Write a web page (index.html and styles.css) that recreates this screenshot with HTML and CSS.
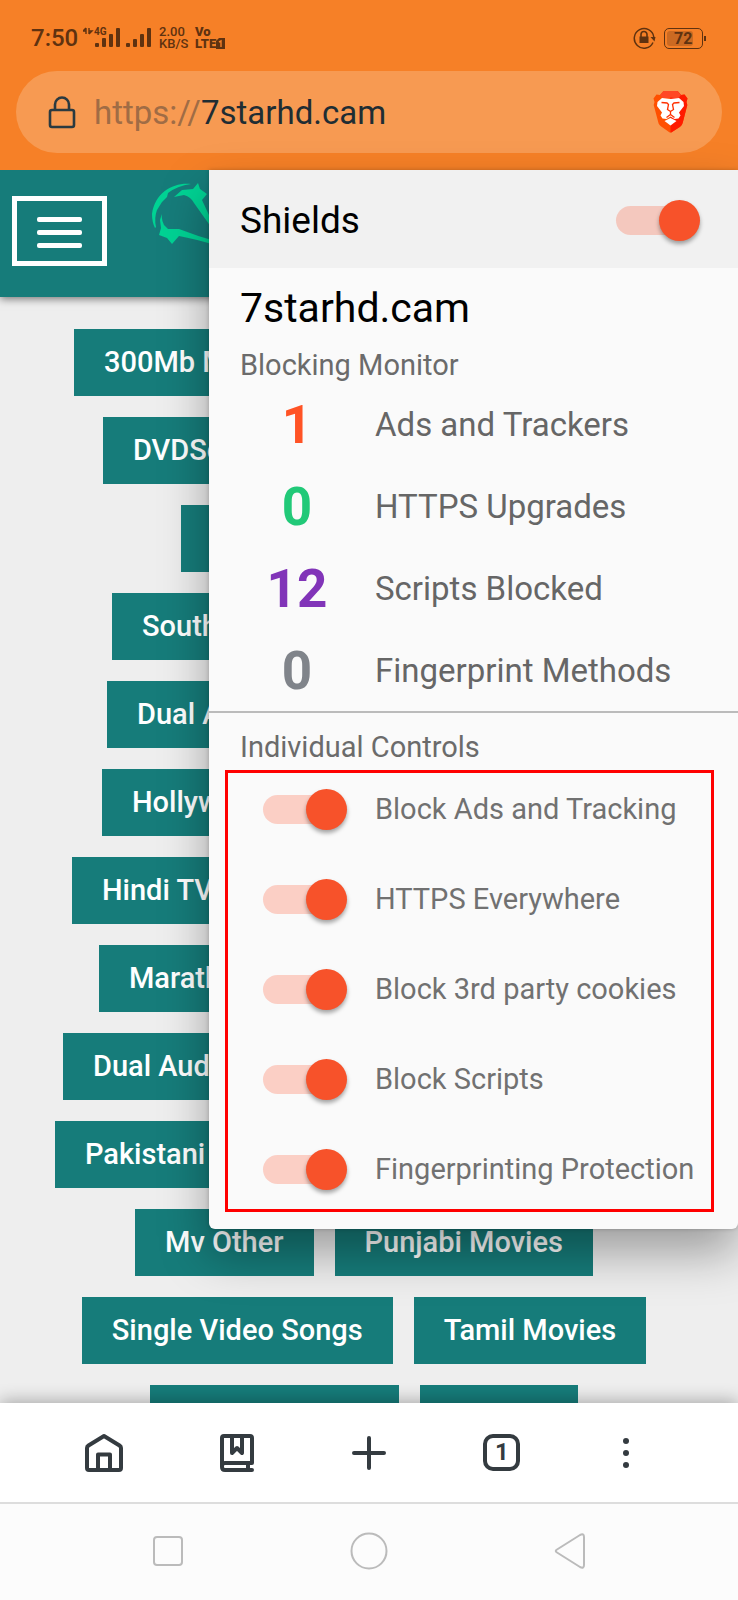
FILE: index.html
```html
<!DOCTYPE html>
<html lang="en">
<head>
    <meta charset="UTF-8">
    <meta name="viewport" content="width=device-width, initial-scale=1.0">
    <title>7starhd.cam</title>
    <link rel="stylesheet" href="styles.css">
</head>
<body>
    <header class="top">
        <div class="status">
            <span class="time">7:50</span>
            <span class="signal">
                <svg width="70" height="22" viewBox="0 0 70 22">
                    <path d="M3 1v6M3 1L0 4h3M6 1v6M6 7l3-3H6" fill="none" stroke="#5f3210" stroke-width="1.400"/>
                    <text x="11" y="8" class="net">4G</text>
                    <g fill="#5f3210">
                        <rect x="12" y="16" width="4" height="4" rx="1"/>
                        <rect x="19" y="11" width="4" height="9" rx="1"/>
                        <rect x="26" y="7" width="4" height="13" rx="1"/>
                        <rect x="33" y="1" width="4" height="19" rx="1"/>
                        <rect x="43" y="16" width="4" height="4" rx="1"/>
                        <rect x="50" y="12" width="4" height="8" rx="1"/>
                        <rect x="57" y="7" width="4" height="13" rx="1"/>
                        <rect x="64" y="1" width="4" height="19" rx="1"/>
                    </g>
                </svg>
            </span>
            <span class="stack speed"><span>2.00</span><span>KB/S</span></span>
            <span class="stack volte"><span>Vo</span><span>LTE<svg width="9" height="11" viewBox="0 0 9 11"><path d="M3 0h6v11H0V3z" fill="#5f3210"/><path d="M3 4l2-1v6" fill="none" stroke="#f68027" stroke-width="1.400"/></svg></span></span>
            <svg class="rotate" width="23" height="22" viewBox="0 0 23 22">
                <path d="M20 15.500A9.800 9.800 0 1 1 20.800 10" fill="none" stroke="#5f3210" stroke-width="1.500"/>
                <path d="M17.500 10h5l-1 4.500z" fill="#5f3210"/>
                <rect x="6.500" y="9.500" width="9" height="6.500" fill="#5f3210"/>
                <path d="M8 10V7.500a3 3 0 0 1 6 0V10" fill="none" stroke="#5f3210" stroke-width="1.600"/>
            </svg>
            <span class="battery"><b>72</b></span>
        </div>
        <div class="address">
            <svg class="lock" width="28" height="34" viewBox="0 0 28 34">
                <rect x="2" y="15" width="24" height="17" rx="2" fill="none" stroke="#2b3a40" stroke-width="2.600"/>
                <path d="M7 15V9.500a7 7 0 0 1 14 0V15" fill="none" stroke="#2b3a40" stroke-width="2.600"/>
            </svg>
            <div class="url"><span>https://</span>7starhd.cam</div>
            <button class="brave" aria-label="Brave Shields">
                <svg width="35" height="42" viewBox="0 0 35 42">
                    <path d="M10.500 0h14l3.500 4 3.500-.5 3 4-1 3.500.8 3-4.500 17.500c-.5 2-1.300 3.200-3 4.500L19 41q-1.500 1-3 0l-7.800-5.500c-1.700-1.200-2.600-2.500-3-4.500L.7 14l.8-3L.5 7.500l3-4L7 4z" fill="#ff5000"/>
                    <path d="M17.500 0h7l3.500 4 3.500-.5 3 4-1 3.500.8 3-4.500 17.500c-.5 2-1.300 3.200-3 4.500L19 41q-.8.500-1.500.5z" fill="#ff1b00"/>
                    <path d="M10.500 0h14l3.500 4-3 3.500-7.500-1-7.500 1L7 4z" fill="#ff4724"/>
                    <path d="M9 7l8.500 1L26 7l4.500 4 .5 4-5 6.500 1.500 3-2 3-4 .5-4-2.500-4 2.500-4-.5-2-3L9 21.500 4 15l.5-4z" fill="#fff"/>
                    <path d="M17.500 27l6 3-6 4.500-6-4.500z" fill="#fff"/>
                    <path d="M8.500 11.500l5.500.5 1.500 1.500-1 5 3 2 3-2-1-5L21 12l5.500-.5M17.500 20.500v3l-4 3m4-3l4 3" fill="none" stroke="#ff3000" stroke-width="1.300"/>
                </svg>
            </button>
        </div>
    </header>

    <div class="content">
        <div class="site">
            <div class="site-header">
                <button class="menu" aria-label="Menu"><i></i><i></i><i></i></button>
                <svg class="logo" width="90" height="72" viewBox="0 0 90 72" fill="#00d394">
                    <path d="M41 4C24 2 5 12 2 34q0 8 3 14l1-1q-2-9 1-17l5-8 5-5 1-4Q27 6 41 4z"/>
                    <path d="M24 17l8-7 11-1 5-6 2 6 7 5-5 6q6 14 14 28l-5-1L44 23q-3-6-10-8z"/>
                    <path d="M13 30q-3 7 1 15l4 4 11 0q18 7 36 12v4Q45 59 29 56l-7 8-5-6-8-3 2-7-1-8z"/>
                </svg>
            </div>
            <nav class="categories">
                <div class="row"><a href="#">300Mb Movies</a></div>
                <div class="row"><a href="#">DVDScr Movies</a></div>
                <div class="row"><a href="#">Featured Movies</a></div>
                <div class="row"><a href="#">South Hindi Movies</a></div>
                <div class="row"><a href="#">Dual Audio Movies</a></div>
                <div class="row"><a href="#">Hollywood Movies</a></div>
                <div class="row"><a href="#">Hindi TV Shows</a></div>
                <div class="row"><a href="#">Marathi Movies</a></div>
                <div class="row"><a href="#">Dual Audio Series</a></div>
                <div class="row"><a href="#">Pakistani Movies</a></div>
                <div class="row"><a href="#">Mv Other</a><a href="#">Punjabi Movies</a></div>
                <div class="row"><a href="#">Single Video Songs</a><a href="#">Tamil Movies</a></div>
                <div class="row"><a href="#">Telugu Movies</a><a href="#">Trailers</a></div>
            </nav>
        </div>

        <!-- Shields panel -->
        <section class="panel">
            <div class="panel-header">
                <label for="shields">Shields</label>
                <input type="checkbox" class="switch" id="shields" checked>
            </div>
            <div class="monitor">
                <h1>7starhd.cam</h1>
                <h2>Blocking Monitor</h2>
                <ul class="stats">
                    <li><b class="orange">1</b>Ads and Trackers</li>
                    <li><b class="green">0</b>HTTPS Upgrades</li>
                    <li><b class="purple">12</b>Scripts Blocked</li>
                    <li><b class="gray">0</b>Fingerprint Methods</li>
                </ul>
            </div>
            <div class="controls">
                <h2>Individual Controls</h2>
                <div class="control-list">
                    <label><input type="checkbox" class="switch" checked>Block Ads and Tracking</label>
                    <label><input type="checkbox" class="switch" checked>HTTPS Everywhere</label>
                    <label><input type="checkbox" class="switch" checked>Block 3rd party cookies</label>
                    <label><input type="checkbox" class="switch" checked>Block Scripts</label>
                    <label><input type="checkbox" class="switch" checked>Fingerprinting Protection</label>
                </div>
            </div>
        </section>
    </div>

    <!-- Browser toolbar -->
    <div class="toolbar">
        <button aria-label="Home">
            <svg width="40" height="40" viewBox="0 0 40 40">
                <path d="M3 15q0-1.500 1.500-2.500L20 3l15.500 9.500Q37 13.500 37 15v20q0 2-2 2H5q-2 0-2-2zM14 37V21.500h12V37"/>
            </svg>
        </button>
        <button aria-label="Bookmarks">
            <svg width="36" height="40" viewBox="0 0 36 40">
                <path d="M33 37H6q-3 0-3-3V5q0-2 2-2h26q2 0 2 2v25H6q-3 0-3 3M29 30v7M13 3v17l5-5 5 5V3"/>
            </svg>
        </button>
        <button aria-label="New tab">
            <svg width="36" height="36" viewBox="0 0 36 36"><path d="M18 3v30M3 18h30"/></svg>
        </button>
        <button aria-label="Tabs"><span class="tabs">1</span></button>
        <button aria-label="More">
            <svg width="8" height="32" viewBox="0 0 8 32">
                <g class="dots"><circle cx="4" cy="4" r="3"/><circle cx="4" cy="16" r="3"/><circle cx="4" cy="28" r="3"/></g>
            </svg>
        </button>
    </div>

    <div class="navbar">
        <button aria-label="Recent apps"><svg width="32" height="32" viewBox="0 0 32 32"><rect x="2" y="2" width="28" height="28" rx="3"/></svg></button>
        <button aria-label="Home screen"><svg width="38" height="38" viewBox="0 0 38 38"><circle cx="19" cy="19" r="17.500"/></svg></button>
        <button aria-label="Back"><svg width="32" height="38" viewBox="0 0 32 38"><path d="M3 17.500L26 3q4-2 4 2v28q0 4-4 2L3 20.500q-2.500-1.500 0-3z"/></svg></button>
    </div>
</body>
</html>
```

FILE: styles.css
```css
* {
    margin: 0;
    padding: 0;
    box-sizing: border-box;
}

body {
    display: flex;
    flex-direction: column;
    height: 100vh;
    font-family: Roboto, "Liberation Sans", sans-serif;
    background-color: #eee;
    overflow: hidden;
}

button {
    border: none;
    background: none;
    font-family: inherit;
}

svg {
    display: block;
}

/* Status bar and address */
.top {
    height: 170px;
    padding: 22px 16px 17px;
    background-color: #f68027;
    display: flex;
    flex-direction: column;
    justify-content: space-between;
}

.status {
    display: flex;
    align-items: center;
    height: 32px;
    padding: 0 19px 0 15px;
    color: #5f3210;
}

.time {
    width: 52px;
    font-size: 24px;
    font-weight: 500;
}

.net {
    font-size: 10px;
    font-weight: bold;
    fill: #5f3210;
}

.stack {
    display: flex;
    flex-direction: column;
    font-size: 13px;
    line-height: 12px;
}

.speed {
    width: 36px;
    margin-left: 6px;
    font-weight: 500;
}

.volte {
    font-weight: 900;
}

.volte svg {
    display: inline-block;
    vertical-align: -1px;
}

.rotate {
    margin-left: auto;
    margin-right: 8px;
}

.battery {
    position: relative;
    width: 39px;
    height: 21px;
    padding: 2px;
    border: 1px solid #5f3210;
    border-radius: 5px;
}

.battery b {
    display: block;
    width: 26px;
    padding-left: 7px;
    border-radius: 3px;
    background-color: #cc6a22;
    font-size: 16px;
    line-height: 15px;
}

.battery::after {
    content: "";
    position: absolute;
    right: -4px;
    top: 7px;
    width: 2px;
    height: 5px;
    background-color: #5f3210;
}

.address {
    display: flex;
    align-items: center;
    height: 82px;
    padding: 0 34px 0 32px;
    border-radius: 41px;
    background-color: #f79a52;
}

.url {
    flex: 1;
    padding-left: 18px;
    font-size: 33px;
    color: #1f2d33;
}

.url span {
    color: #a06c45;
}

/* Page behind the panel */
.content {
    position: relative;
    z-index: 1;
    flex: 1;
    min-height: 0;
}

.site {
    height: 100%;
    overflow: hidden;
}

.site-header {
    display: flex;
    align-items: flex-start;
    gap: 43px;
    height: 127px;
    padding: 10px 12px;
    background-color: #167c7a;
    box-shadow: 0 2px 8px rgba(0, 0, 0, 0.5);
}

.menu {
    display: flex;
    flex-direction: column;
    justify-content: center;
    align-items: center;
    gap: 8px;
    width: 95px;
    height: 70px;
    margin-top: 16px;
    padding-top: 3px;
    border: 5px solid #fff;
}

.menu i {
    width: 45px;
    height: 5px;
    border-radius: 2px;
    background-color: #fff;
}

.categories {
    display: flex;
    flex-direction: column;
    align-items: center;
    gap: 21px;
    padding: 32px 10px 0 0;
}

.row {
    display: flex;
    justify-content: center;
    gap: 21px;
    white-space: nowrap;
}

.row a {
    flex: 1 0 auto;
    padding: 0 30px;
    font-size: 29px;
    font-weight: 500;
    line-height: 67px;
    color: #fff;
    text-decoration: none;
    background-color: #167c7a;
}

.row:nth-child(1) { width: 580px; }
.row:nth-child(2) { width: 522px; }
.row:nth-child(3) { width: 367px; }
.row:nth-child(4) { width: 504px; }
.row:nth-child(5) { width: 514px; }
.row:nth-child(6) { width: 524px; }
.row:nth-child(7) { width: 584px; }
.row:nth-child(8) { width: 530px; }
.row:nth-child(9) { width: 602px; }
.row:nth-child(10) { width: 618px; }

/* Shields panel */
.panel {
    position: absolute;
    top: 0;
    left: 209px;
    right: 0;
    padding-bottom: 17px;
    border-radius: 0 0 6px 6px;
    background-color: #fafafa;
    box-shadow: 0 24px 48px rgba(0, 0, 0, 0.34), 0 0 4px rgba(0, 0, 0, 0.2);
}

.panel-header {
    display: flex;
    align-items: center;
    justify-content: space-between;
    height: 98px;
    padding: 2px 38px 0 31px;
    font-size: 37px;
    background-color: #f1f1f1;
}

.switch {
    appearance: none;
    position: relative;
    display: flex;
    justify-content: flex-end;
    flex: none;
    width: 84px;
    height: 41px;
}

.switch::before {
    content: "";
    position: absolute;
    top: 6px;
    left: 0;
    width: 76px;
    height: 29px;
    border-radius: 15px;
    background-color: rgba(255, 80, 40, 0.25);
}

.switch::after {
    content: "";
    position: relative;
    width: 41px;
    height: 41px;
    border-radius: 50%;
    background-color: #f7522a;
    box-shadow: 0 3px 4px rgba(0, 0, 0, 0.35);
}

h1 {
    padding: 16px 31px 0;
    font-size: 41px;
    line-height: 48px;
    font-weight: normal;
}

h2 {
    padding: 0 31px;
    font-size: 29px;
    line-height: 36px;
    font-weight: normal;
    color: #6b6b6b;
}

.monitor {
    height: 445px;
    border-bottom: 2px solid #bbb;
}

.monitor h2 {
    margin-top: 15px;
}

.stats {
    padding-top: 1px;
    list-style: none;
}

.stats li {
    display: flex;
    align-items: center;
    height: 82px;
    font-size: 33px;
    line-height: 40px;
    color: #666;
}

.stats b {
    width: 166px;
    padding-left: 10px;
    text-align: center;
    font-size: 53px;
    line-height: 54px;
}

.orange { color: #ff5325; }
.green { color: #21c978; }
.purple { color: #8134b8; }
.gray { color: #80848a; }

.controls h2 {
    padding-top: 16px;
}

.control-list {
    display: flex;
    flex-direction: column;
    gap: 30px;
    margin: 5px 24px 0 16px;
    padding: 6px 35px 10px;
    border: 3px solid #f00;
}

.control-list label {
    display: flex;
    align-items: center;
    gap: 28px;
    height: 60px;
    font-size: 29px;
    color: #717171;
    white-space: nowrap;
}

/* Bottom bars */
.toolbar {
    position: relative;
    z-index: 2;
    display: grid;
    grid-template-columns: 8fr 8fr 8fr 8fr 7fr;
    height: 101px;
    padding: 0 54px 0 38px;
    background-color: #fff;
    border-bottom: 2px solid #ddd;
    box-shadow: 0 -2px 16px rgba(0, 0, 0, 0.3);
}

.toolbar button,
.navbar button {
    display: flex;
    align-items: center;
    justify-content: center;
}

.toolbar svg {
    fill: none;
    stroke: #343b40;
    stroke-width: 4;
    stroke-linecap: round;
    stroke-linejoin: round;
}

.toolbar .dots {
    fill: #343b40;
    stroke: none;
}

.tabs {
    width: 37px;
    height: 37px;
    border: 4px solid #343b40;
    border-radius: 10px;
    font-size: 24px;
    font-weight: bold;
    line-height: 29px;
    color: #343b40;
}

.navbar {
    position: relative;
    z-index: 2;
    display: grid;
    grid-template-columns: 1fr 1fr 1fr;
    height: 96px;
    padding: 0 67px 2px;
    background-color: #fcfcfc;
}

.navbar svg {
    fill: none;
    stroke: #bbb;
    stroke-width: 2;
}
```
